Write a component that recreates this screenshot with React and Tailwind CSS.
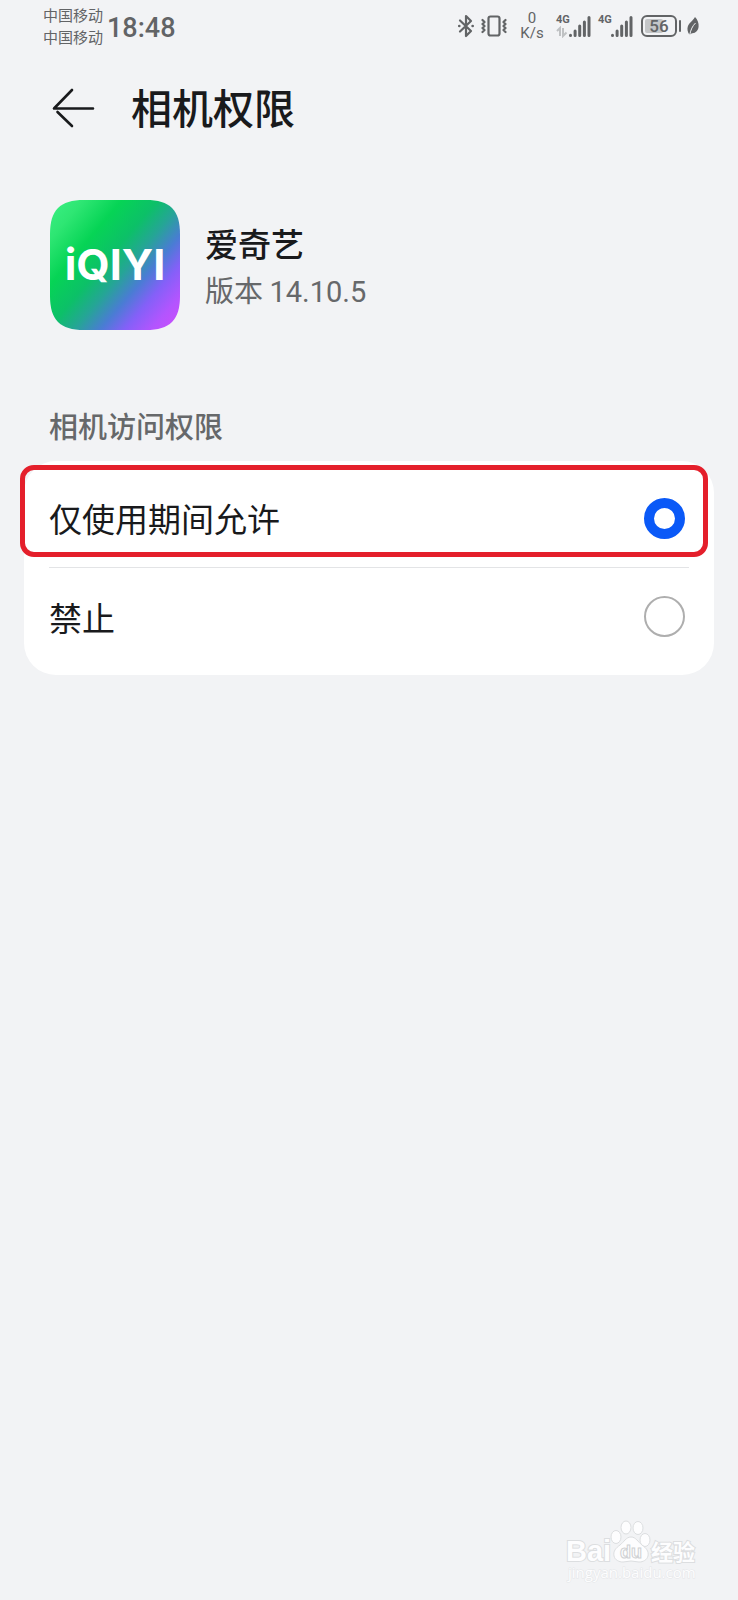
import React, { useState } from 'react';

const OPTIONS = [
  { value: 'while-using', label: '仅使用期间允许' },
  { value: 'deny', label: '禁止' },
];

function BluetoothIcon() {
  return (
    <svg className="w-4 h-6" viewBox="0 0 16 24" fill="none" stroke="#626466" strokeWidth="2.200" strokeLinejoin="round" strokeLinecap="round">
      <path d="M2 6.500l11 10.500-5 5V2l5 5L2 17.500" />
      <path d="M1.200 12h.1M14.600 12h.1" strokeWidth="2.600" />
    </svg>
  );
}

function VibrateIcon() {
  return (
    <svg className="w-[26px] h-6" viewBox="0 0 26 24" fill="none" stroke="#626466" strokeWidth="2.200" strokeLinejoin="round" strokeLinecap="round">
      <rect x="7.500" y="2.500" width="11" height="19" rx="2" />
      <path d="M1.500 6l2 2-2 2 2 2-2 2 2 2-2 2M24.500 6l-2 2 2 2-2 2 2 2-2 2 2 2" />
    </svg>
  );
}

function SignalBars() {
  return (
    <svg className="w-[22px] h-6" viewBox="0 0 22 24" stroke="#626466" strokeWidth="3" strokeLinecap="round">
      <path d="M1.500 21.300v.2M6.100 17v4.500M10.700 12v9.500M15.400 8v13.500M20 3.500v18" />
    </svg>
  );
}

function Signal({ arrows }) {
  return (
    <div className="flex items-center">
      <div className="w-[13px] h-6 flex flex-col justify-between">
        <span className="font-['Roboto'] text-[11px] leading-3 font-bold">4G</span>
        <svg className="w-3 h-3" viewBox="0 0 12 12" fill="none" stroke="#bfc1c3" strokeWidth="2">
          {arrows && <path d="M1 5l3-3v8M7 2v8l3.500-3.500" />}
        </svg>
      </div>
      <SignalBars />
    </div>
  );
}

function Battery({ level }) {
  return (
    <div className="flex items-center gap-[2px]" aria-label={`${level}%`}>
      <div className="relative w-9 h-[22px] rounded-md border-2 border-[#626466] flex items-center justify-center">
        <span className="absolute left-[2px] inset-y-[2px] rounded-xs bg-[#c4c6c8]" style={{ width: `${level}%` }} />
        <span className="relative font-['Roboto'] text-[17px] leading-none font-medium">{level}</span>
      </div>
      <span className="w-[2px] h-3 rounded-full bg-[#626466]" />
    </div>
  );
}

function LeafIcon() {
  return (
    <svg className="w-3 h-5" viewBox="0 0 12 20" fill="#626466">
      <path d="M8 1c2.500 2.500 4 6 3.600 9.500C11.300 14.500 8.500 17.500 5 17.200l-2.500 1.500C.5 16 0 13 .8 10.500 2 6.500 5.500 5.500 8 1z" />
      <path d="M8.500 7C5.500 10 3.800 13.500 2.700 19" stroke="#f2f3f5" strokeWidth="1" fill="none" />
    </svg>
  );
}

function StatusBar() {
  return (
    <div className="h-13 pl-[43px] pr-[39px] flex items-center justify-between text-[#626466]">
      <div className="flex items-center gap-1">
        <div className="text-[15px] leading-[22px]">
          <div>中国移动</div>
          <div>中国移动</div>
        </div>
        <time className="pt-1 font-['Roboto'] text-[27px] leading-none font-medium">18:48</time>
      </div>
      <div className="flex items-center">
        <BluetoothIcon />
        <div className="ml-[7px]"><VibrateIcon /></div>
        <div className="ml-[13px] w-6 flex flex-col items-center font-['Roboto'] text-[15px] leading-[15px]">
          <span>0</span>
          <span>K/s</span>
        </div>
        <div className="ml-3 flex gap-[7px]">
          <Signal arrows />
          <Signal />
        </div>
        <div className="ml-2 mr-[6px]"><Battery level={56} /></div>
        <LeafIcon />
      </div>
    </div>
  );
}

function AppLogo() {
  return (
    <svg className="size-[130px] shrink-0" viewBox="0 0 130 130" role="img" aria-label="iQIYI">
      <defs>
        <linearGradient id="logo-bg" x1="0" y1="0" x2="1.07" y2="0.91">
          <stop offset="0" stopColor="#3bf084" />
          <stop offset="0.14" stopColor="#2ee673" />
          <stop offset="0.3" stopColor="#06d455" />
          <stop offset="0.45" stopColor="#0cc068" />
          <stop offset="0.56" stopColor="#25a596" />
          <stop offset="0.67" stopColor="#4a7cd4" />
          <stop offset="0.77" stopColor="#8460f8" />
          <stop offset="0.88" stopColor="#b255fe" />
          <stop offset="1" stopColor="#cf4dfb" />
        </linearGradient>
      </defs>
      <path d="M34 0h62c24 0 34 10 34 34v62c0 24-10 34-34 34H34C10 130 0 120 0 96V34C0 10 10 0 34 0z" fill="url(#logo-bg)" />
      <text x="65" y="80" textAnchor="middle" fill="#fff" fontFamily="Inter, sans-serif" fontSize="43" fontWeight="700">iQIYI</text>
    </svg>
  );
}

function Watermark() {
  return (
    <svg className="w-[134px] h-16" viewBox="0 0 134 64" fill="#fdfdfe" stroke="#dcdee0" strokeWidth="1">
      <g fontFamily="'Liberation Sans', 'Noto Sans CJK SC', sans-serif" fontWeight="700" paintOrder="stroke" strokeWidth="2">
        <text x="0" y="41" fontSize="29">Bai</text>
        <text x="85" y="40" fontSize="22">经验</text>
      </g>
      <text x="2" y="58" fontFamily="'Open Sans', sans-serif" fontSize="15" paintOrder="stroke" stroke="#e4e6e8">jingyan.baidu.com</text>
      <ellipse cx="50" cy="17" rx="5" ry="6.500" />
      <ellipse cx="60" cy="7.500" rx="5" ry="6.500" />
      <ellipse cx="72" cy="8" rx="5" ry="6.500" />
      <ellipse cx="79" cy="20" rx="5" ry="6.500" />
      <path d="M65 17c-5 0-7 5-11 8s-7 6-6 11c1 4 5 6 9 6 3 0 5-1 8-1s5 1 8 1c4 0 8-2 9-6 1-5-2-8-6-11s-6-8-11-8z" />
      <text x="65" y="38" textAnchor="middle" fontFamily="'Liberation Sans', sans-serif" fontSize="18" fontWeight="700" stroke="#cfd1d3">du</text>
    </svg>
  );
}

function App() {
  const [permission, setPermission] = useState('while-using');

  return (
    <div className="min-h-screen flex flex-col bg-[#f2f3f5] font-['Noto_Sans_CJK_SC',sans-serif] text-[#191a1c]">
      <StatusBar />

      <header className="h-28 px-[52px] flex items-center gap-9">
        <button type="button" aria-label="返回" className="shrink-0">
          <svg className="w-[43px] h-10" viewBox="0 0 43 40" fill="none" stroke="#191a1c" strokeWidth="2.600" strokeLinecap="round" strokeLinejoin="round">
            <path d="M20 2L2 20.500h39M5.500 24L20 38" />
          </svg>
        </button>
        <h1 className="pb-1 text-[41px] leading-none font-medium">相机权限</h1>
      </header>

      <main>
        <section className="mt-9 px-[50px] flex items-center gap-[25px]">
          <AppLogo />
          <div className="pt-[2px]">
            <h2 className="text-[33px] leading-[48px] font-medium">爱奇艺</h2>
            <p className="text-[29px] leading-[44px] text-[#66686a]">
              版本 <span className="font-['Roboto']">14.10.5</span>
            </p>
          </div>
        </section>

        <fieldset className="mt-[75px] px-6">
          <legend className="px-[25px] text-[29px] leading-10 font-medium text-[#66686a]">相机访问权限</legend>
          <div className="relative mt-4 pt-2 pb-[10px] px-[25px] rounded-[32px] bg-white">
            {OPTIONS.map((option, i) => (
              <label
                key={option.value}
                className={`h-[98px] pr-1 flex items-center justify-between text-[33px] ${i > 0 ? 'border-t border-[#e3e4e6]' : ''}`}
              >
                <span className="pt-[2px]">{option.label}</span>
                <input
                  type="radio"
                  name="camera-permission"
                  value={option.value}
                  checked={permission === option.value}
                  onChange={() => setPermission(option.value)}
                  className="appearance-none size-[41px] shrink-0 rounded-full bg-white border-2 border-[#aeaeae] checked:border-[10px] checked:border-[#0a59f7]"
                />
              </label>
            ))}
            <div className="absolute top-1 -left-1 right-[6px] h-[92px] rounded-[14px] border-[5px] border-[#e41f2b] pointer-events-none" />
          </div>
        </fieldset>
      </main>

      <footer className="mt-auto pb-4 pr-[38px] flex justify-end">
        <Watermark />
      </footer>
    </div>
  );
}

export default App;
